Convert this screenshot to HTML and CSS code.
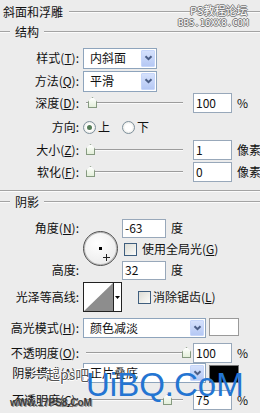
FILE: index.html
```html
<!DOCTYPE html>
<html lang="zh-CN">
<head>
    <meta charset="UTF-8">
    <meta name="viewport" content="width=device-width, initial-scale=1.0">
    <title>斜面和浮雕</title>
    <link rel="stylesheet" href="styles.css">
</head>
<body>
<div class="panel">
    <div class="head"><span class="head-text">斜面和浮雕</span><span class="rule"></span></div>
    <div class="group"><span class="stub"></span><span class="group-text">结构</span><span class="rule"></span></div>

    <div class="row r-style">
        <span class="lbl">样式(<u>T</u>):</span>
        <div class="select">
            <span class="select-text">内斜面</span>
            <span class="drop"><svg width="9" height="6" viewBox="0 0 9 6"><path d="M1.5 1.2L4.5 4.2L7.5 1.2" fill="none" stroke="#4b5e86" stroke-width="2"/></svg></span>
        </div>
    </div>
    <div class="row r-method">
        <span class="lbl">方法(<u>Q</u>):</span>
        <div class="select">
            <span class="select-text">平滑</span>
            <span class="drop"><svg width="9" height="6" viewBox="0 0 9 6"><path d="M1.5 1.2L4.5 4.2L7.5 1.2" fill="none" stroke="#4b5e86" stroke-width="2"/></svg></span>
        </div>
    </div>
    <div class="row">
        <span class="lbl">深度(<u>D</u>):</span>
        <div class="slider"><span class="track"></span><span class="thumb" style="left: 5px"></span></div>
        <span class="input">100</span><span class="unit">%</span>
    </div>
    <div class="row r-dir">
        <span class="lbl">方向:</span>
        <span class="radio on"></span><span class="radio-text">上</span>
        <span class="radio"></span><span class="radio-text">下</span>
    </div>
    <div class="row r-size">
        <span class="lbl">大小(<u>Z</u>):</span>
        <div class="slider"><span class="track"></span><span class="thumb" style="left: 3px"></span></div>
        <span class="input">1</span><span class="unit">像素</span>
    </div>
    <div class="row">
        <span class="lbl">软化(<u>F</u>):</span>
        <div class="slider"><span class="track"></span><span class="thumb" style="left: 3px"></span></div>
        <span class="input">0</span><span class="unit">像素</span>
    </div>

    <div class="sep"></div>
    <div class="group g-shadow"><span class="stub"></span><span class="group-text">阴影</span><span class="rule"></span></div>

    <div class="angle">
        <span class="lbl a-lbl1">角度(<u>N</u>):</span>
        <div class="dial">
            <span class="dot"></span>
            <svg class="cursor" width="7" height="7" viewBox="0 0 7 7"><path d="M3.5 0V7M0 3.5H7" stroke="#222" stroke-width="1"/></svg>
        </div>
        <div class="a-val"><span class="input wide">-63</span><span class="unit">度</span></div>
        <div class="a-check"><span class="check"></span><span>使用全局光(<u>G</u>)</span></div>
        <span class="lbl a-lbl2">高度:</span>
        <div class="a-val2"><span class="input wide">32</span><span class="unit">度</span></div>
    </div>

    <div class="row r-contour">
        <span class="lbl">光泽等高线:</span>
        <div class="contour">
            <svg width="29" height="28" viewBox="0 0 29 28"><rect width="29" height="28" fill="#fff"/><polygon points="0,28 29,0 29,28" fill="#8d8d8d"/></svg>
            <span class="contour-drop"><svg width="5" height="3" viewBox="0 0 5 3"><polygon points="0,0 5,0 2.5,3" fill="#000"/></svg></span>
        </div>
        <span class="check c-anti"></span><span>消除锯齿(<u>L</u>)</span>
    </div>

    <div class="row r-hmode">
        <span class="lbl">高光模式(<u>H</u>):</span>
        <div class="select long">
            <span class="select-text">颜色减淡</span>
            <span class="drop"><svg width="9" height="6" viewBox="0 0 9 6"><path d="M1.5 1.2L4.5 4.2L7.5 1.2" fill="none" stroke="#4b5e86" stroke-width="2"/></svg></span>
        </div>
        <span class="swatch white"></span>
    </div>
    <div class="row r-op1">
        <span class="lbl">不透明度(<u>O</u>):</span>
        <div class="slider"><span class="track"></span><span class="thumb" style="left: 99px"></span></div>
        <span class="input">100</span><span class="unit">%</span>
    </div>
    <div class="row">
        <span class="lbl">阴影模式(<u>A</u>):</span>
        <div class="select long">
            <span class="select-text">正片叠底</span>
            <span class="drop"><svg width="9" height="6" viewBox="0 0 9 6"><path d="M1.5 1.2L4.5 4.2L7.5 1.2" fill="none" stroke="#4b5e86" stroke-width="2"/></svg></span>
        </div>
        <span class="swatch black"></span>
    </div>
    <div class="row r-op2">
        <span class="lbl">不透明度(<u>C</u>):</span>
        <div class="slider"><span class="track"></span><span class="thumb" style="left: 80px"></span></div>
        <span class="input">75</span><span class="unit">%</span>
    </div>

    <!-- 水印 -->
    <span class="wm wm-ps">PS教程论坛</span>
    <span class="wm wm-bbs">BBS.16XX8.COM</span>
    <span class="wm wm-17">一起ps吧</span>
    <span class="wm wm-uibq">UiBQ.CoM</span>
    <span class="wm wm-www">wWw.17PS8.CoM</span>
</div>
</body>
</html>
```

FILE: styles.css
```css
body {
    margin: 0;
    background: #ececec;
    font-family: "Noto Sans CJK SC", sans-serif;
    font-size: 12px;
    line-height: 1;
    color: #111;
    width: 260px;
    height: 413px;
    overflow: hidden;
}
.panel {
    position: relative;
    height: 413px;
}
u {
    text-decoration: underline;
    text-underline-offset: 1px;
}

/* Titulos de grupo */
.head {
    display: flex;
    align-items: center;
    height: 24px;
    padding-left: 3px;
}
.head-text {
    margin-right: 6px;
}
.rule {
    flex: 1;
    border-top: 1px solid #a3a3a3;
    border-bottom: 1px solid #fbfbfb;
}
.group {
    display: flex;
    align-items: center;
    height: 16px;
}
.g-shadow {
    height: 20px;
}
.stub {
    width: 10px;
    border-top: 1px solid #a3a3a3;
    border-bottom: 1px solid #fbfbfb;
}
.group-text {
    margin: 0 5px;
}
.sep {
    margin-top: 7px;
    border-top: 1px solid #a3a3a3;
    border-bottom: 1px solid #fbfbfb;
}

/* Filas */
.row {
    display: flex;
    align-items: center;
    height: 22px;
    white-space: nowrap;
}
.lbl {
    width: 79px;
    flex: none;
    text-align: right;
    white-space: nowrap;
}
.row .lbl {
    margin-right: 4px;
}
.r-style { margin-top: 7px; }
.r-method { margin-top: 1px; }
.r-dir { margin-top: 2px; }
.r-size { margin-top: 1px; }
.r-contour { height: 30px; margin-top: 2px; }
.r-hmode { height: 20px; margin-top: 6px; }
.r-op1 { height: 20px; margin-top: 5px; }
.r-op1 + .row { height: 20px; }
.r-op2 { height: 20px; margin-top: 7px; }

/* Listas desplegables */
.select {
    display: flex;
    align-items: center;
    width: 74px;
    height: 21px;
    box-sizing: border-box;
    border: 1px solid #8ea4bc;
    background: #fff;
    flex: none;
}
.select.long {
    width: 123px;
    height: 20px;
}
.select-text {
    flex: 1;
    padding-left: 6px;
}
.drop {
    width: 14px;
    height: calc(100% - 2px);
    margin-right: 1px;
    box-sizing: border-box;
    border: 1px solid #c6d6fa;
    border-radius: 1px;
    background: linear-gradient(#d5e1fc, #b5c8f4);
    display: flex;
    align-items: center;
    justify-content: center;
}

/* Deslizadores */
.slider {
    position: relative;
    width: 104px;
    height: 12px;
    margin-right: 6px;
    flex: none;
}
.track {
    position: absolute;
    left: 3px;
    right: 4px;
    top: 5px;
    height: 1px;
    background: #9c9c9c;
    border-bottom: 1px solid #fafafa;
}
.thumb {
    position: absolute;
    top: 0;
    width: 9px;
    height: 11px;
    box-sizing: border-box;
    background: linear-gradient(#ffffff, #e3efd9);
    border: 1px solid #869a80;
    clip-path: polygon(50% 0, 100% 40%, 100% 100%, 0 100%, 0 40%);
}

.input {
    width: 39px;
    height: 20px;
    box-sizing: border-box;
    border: 1px solid #98a8ba;
    background: #fff;
    padding-left: 2px;
    display: flex;
    align-items: center;
    flex: none;
}
.input.wide {
    width: 44px;
    height: 19px;
}
.unit {
    margin-left: 5px;
    flex: none;
    white-space: nowrap;
}

/* Radio y casillas */
.radio {
    width: 13px;
    height: 13px;
    box-sizing: border-box;
    border-radius: 50%;
    border: 1px solid #7e909c;
    background: radial-gradient(#ffffff 40%, #dcdcd4);
    display: flex;
    align-items: center;
    justify-content: center;
    margin-right: 2px;
}
.radio.on::after {
    content: "";
    width: 5px;
    height: 5px;
    border-radius: 50%;
    background: #557d57;
}
.radio-text {
    margin-right: 12px;
}
.check {
    width: 13px;
    height: 13px;
    box-sizing: border-box;
    border: 1px solid #3f5e7e;
    background: linear-gradient(135deg, #dcdcd5, #fbfbf9);
    margin-right: 5px;
    flex: none;
}
.c-anti {
    margin-left: 16px;
    margin-right: 2px;
}

/* Angulo */
.angle {
    display: grid;
    grid-template-columns: 79px 35px 1fr;
    grid-template-rows: 20px 22px 20px;
    column-gap: 4px;
    margin-top: 6px;
    white-space: nowrap;
}
.a-lbl1 { grid-column: 1; grid-row: 1; align-self: center; }
.a-lbl2 { grid-column: 1; grid-row: 3; align-self: center; }
.dial {
    grid-column: 2;
    grid-row: 1 / 4;
    align-self: start;
    margin-top: 13px;
    position: relative;
    width: 35px;
    height: 35px;
    box-sizing: border-box;
    border-radius: 50%;
    border: 1px solid #505050;
    box-shadow: inset 0 0 0 1px #b8b8b8;
    background: radial-gradient(circle at 40% 35%, #ffffff, #e6e6e6);
}
.dot {
    position: absolute;
    left: 15px;
    top: 15px;
    width: 3px;
    height: 3px;
    background: #000;
}
.cursor {
    position: absolute;
    left: 19px;
    top: 22px;
}
.a-val, .a-val2 {
    grid-column: 3;
    display: flex;
    align-items: center;
}
.a-val { grid-row: 1; }
.a-val2 { grid-row: 3; }
.a-check {
    grid-column: 3;
    grid-row: 2;
    display: flex;
    align-items: center;
    padding-left: 2px;
}

/* Contorno */
.contour {
    display: flex;
    width: 39px;
    height: 30px;
    box-sizing: border-box;
    border: 1px solid #222;
    background: #fff;
    flex: none;
}
.contour svg {
    display: block;
}
.contour-drop {
    flex: 1;
    border-left: 1px solid #222;
    display: flex;
    align-items: center;
    justify-content: center;
}

.swatch {
    width: 30px;
    height: 18px;
    box-sizing: border-box;
    border: 1px solid #9a9a9a;
    margin-left: 3px;
    align-self: flex-start;
    flex: none;
}
.swatch.white { background: #fff; }
.swatch.black { background: #000; border-color: #777; margin-top: 2px; }

/* Marcas de agua */
.wm {
    position: absolute;
    white-space: nowrap;
}
.wm-ps {
    left: 190px;
    top: 5px;
    font-size: 11px;
    color: #fff;
    text-shadow: 1px 0 #777, -1px 0 #777, 0 1px #777, 0 -1px #777;
}
.wm-bbs {
    left: 178px;
    top: 19px;
    font-family: "DejaVu Sans Mono", monospace;
    font-size: 9px;
    color: #fff;
    text-shadow: 1px 0 #777, -1px 0 #777, 0 1px #777, 0 -1px #777;
}
.wm-17 {
    left: 32px;
    top: 367px;
    font-size: 14px;
    color: #555;
    text-shadow: 1px 0 #fff, -1px 0 #fff, 0 1px #fff, 0 -1px #fff;
}
.wm-uibq {
    left: 86px;
    top: 368px;
    font-family: "Liberation Sans", Arial, sans-serif;
    font-size: 33px;
    color: #2475d2;
}
.wm-www {
    left: 10px;
    top: 398px;
    font-family: "Liberation Sans", Arial, sans-serif;
    font-size: 10px;
    font-weight: bold;
    color: #3c3c3c;
    text-shadow: 1px 1px #999;
}
```
